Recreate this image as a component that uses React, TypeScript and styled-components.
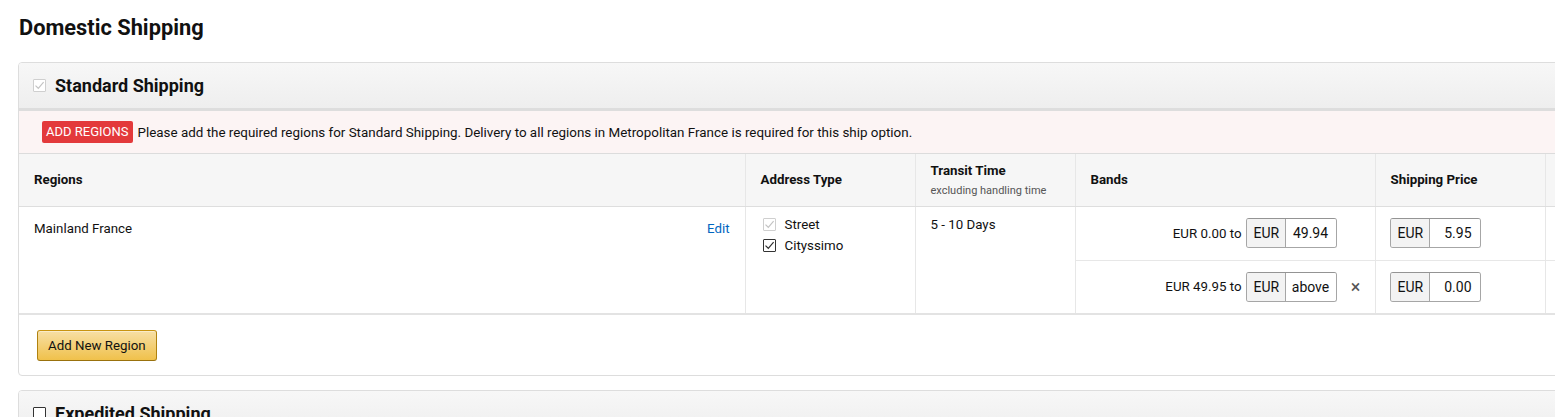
import React from "react";
import styled, { createGlobalStyle } from "styled-components";

const Global = createGlobalStyle`
  html, body { margin: 0; padding: 0; background: #fff; overflow: hidden; }
  body { font-family: Roboto, "Noto Sans", Arial, sans-serif; color: #111; font-size: 13px; }
`;

const Page = styled.div`
  padding: 15px 0 0 18px;
  width: 1620px;
`;

const Title = styled.h1`
  margin: 0 0 21px 1px;
  font-size: 21.8px;
  font-weight: 700;
  line-height: 26px;
  color: #111;
`;

const Panel = styled.section`
  border: 1px solid #ddd;
  border-radius: 4px;
  background: #fff;
  margin-bottom: 14px;
  overflow: hidden;
`;

const PanelHeader = styled.div`
  display: flex;
  align-items: center;
  gap: 9px;
  height: 45px;
  padding: 0 14px;
  background: linear-gradient(#f7f7f7, #eeeeee);
  border-bottom: 3px solid #dddddd;
`;

const HeaderTitle = styled.span`
  font-size: 18px;
  font-weight: 700;
  color: #111;
`;

const Box = styled.span<{ $state: "disabled" | "checked" | "empty" }>`
  display: inline-flex;
  align-items: center;
  justify-content: center;
  width: 13px;
  height: 13px;
  box-sizing: border-box;
  flex: none;
  border: 1px solid ${(p) => (p.$state === "disabled" ? "#cfcfcf" : "#333")};
  border-radius: 1px;
  background: #fff;
  svg { display: block; }
`;

const Check = ({ state }: { state: "disabled" | "checked" | "empty" }) => (
  <Box $state={state}>
    {state !== "empty" && (
      <svg width="11" height="11" viewBox="0 0 11 11">
        <path
          d="M1.5 5.6 L4.3 8.3 L9.6 2.2"
          fill="none"
          stroke={state === "disabled" ? "#c4c4c4" : "#333"}
          strokeWidth="1.2"
        />
      </svg>
    )}
  </Box>
);

const Alert = styled.div`
  display: flex;
  align-items: center;
  gap: 5px;
  height: 42px;
  padding: 0 23px;
  background: #fcf4f4;
  border-bottom: 1px solid #dcdcdc;
  font-size: 13.4px;
  color: #111;
`;

const Badge = styled.span`
  background: #e3393b;
  color: #fff;
  border-radius: 2px;
  height: 22px;
  line-height: 22px;
  padding: 0 4px;
  font-size: 13px;
`;

const Table = styled.table`
  border-collapse: collapse;
  width: 100%;
  table-layout: fixed;
  border-bottom: 2px solid #e3e3e3;
`;

const Th = styled.th<{ $w?: number }>`
  width: ${(p) => (p.$w ? `${p.$w}px` : "auto")};
  background: #f6f6f6;
  height: 52px;
  padding: 0 15px;
  text-align: left;
  font-size: 13.3px;
  font-weight: 700;
  color: #111;
  border-left: 1px solid #e7e7e7;
  border-bottom: 1px solid #dedede;
  box-sizing: border-box;
  vertical-align: middle;
  &:first-child { border-left: none; }
`;

const SubHead = styled.div`
  font-size: 11px;
  font-weight: 400;
  color: #555;
  margin-top: 6px;
`;

const Td = styled.td`
  border-left: 1px solid #e7e7e7;
  vertical-align: top;
  padding: 10px 15px;
  font-size: 13.3px;
  color: #111;
  &:first-child { border-left: none; }
`;

const RegionCell = styled.div`
  display: flex;
  justify-content: space-between;
  padding-top: 4px;
`;

const EditLink = styled.a`
  color: #0066c0;
  text-decoration: none;
  cursor: pointer;
`;

const OptionList = styled.div`
  display: flex;
  flex-direction: column;
  gap: 5px;
  padding-left: 2px;
`;

const Option = styled.label`
  display: flex;
  align-items: center;
  gap: 9px;
  line-height: 16px;
`;

const BandTd = styled.td<{ $last?: boolean; $pad?: boolean }>`
  border-left: 1px solid #e7e7e7;
  border-bottom: ${(p) => (p.$last ? "none" : "1px solid #e7e7e7")};
  height: 54px;
  padding: 0 ${(p) => (p.$pad ? "14px" : "0")} 0 14px;
  vertical-align: middle;
  box-sizing: border-box;
  font-size: 13.3px;
`;

const BandRow = styled.div<{ $align: "right" | "left" }>`
  display: flex;
  align-items: center;
  justify-content: ${(p) => (p.$align === "right" ? "flex-end" : "flex-start")};
`;

const FromText = styled.span`
  margin-right: 4px;
`;

const RemoveSlot = styled.span`
  width: 38px;
  text-align: center;
  font-size: 18px;
  color: #555;
  line-height: 16px;
`;

const InputGroup = styled.div`
  display: inline-flex;
  height: 30px;
  border: 1px solid #a6a6a6;
  border-top-color: #949494;
  border-radius: 3px;
  overflow: hidden;
  box-sizing: border-box;
`;

const Addon = styled.span`
  display: flex;
  align-items: center;
  padding: 0 7px;
  background: #f3f3f3;
  border-right: 1px solid #a6a6a6;
  font-size: 14px;
  width: 39px;
  box-sizing: border-box;
`;

const Field = styled.span<{ $align: "left" | "right" }>`
  display: flex;
  align-items: center;
  justify-content: ${(p) => (p.$align === "right" ? "flex-end" : "center")};
  width: 50px;
  padding: 0 8px;
  box-sizing: border-box;
  background: #fff;
  font-size: 14px;
`;

const Footer = styled.div`
  padding: 15px 18px 14px;
`;

const YellowButton = styled.button`
  font-family: inherit;
  font-size: 13.3px;
  color: #111;
  height: 31px;
  padding: 0 10px;
  border: 1px solid;
  border-color: #c89411 #b0820f #99710d;
  border-radius: 3px;
  background: linear-gradient(#f7dfa5, #f0c14b);
  box-shadow: inset 0 1px 0 rgba(255, 255, 255, 0.4);
  cursor: pointer;
`;

const bands = [
  { from: "EUR 0.00 to", to: "49.94", price: "5.95", removable: false },
  { from: "EUR 49.95 to", to: "above", price: "0.00", removable: true },
];

export default function App() {
  return (
    <>
      <Global />
      <Page>
        <Title>Domestic Shipping</Title>
        <Panel>
          <PanelHeader>
            <Check state="disabled" />
            <HeaderTitle>Standard Shipping</HeaderTitle>
          </PanelHeader>
          <Alert>
            <Badge>ADD REGIONS</Badge>
            <span>
              Please add the required regions for Standard Shipping. Delivery to all regions in
              Metropolitan France is required for this ship option.
            </span>
          </Alert>
          <Table>
            <thead>
              <tr>
                <Th $w={726}>Regions</Th>
                <Th $w={170}>Address Type</Th>
                <Th $w={160}>
                  Transit Time
                  <SubHead>excluding handling time</SubHead>
                </Th>
                <Th $w={300}>Bands</Th>
                <Th $w={170}>Shipping Price</Th>
                <Th></Th>
              </tr>
            </thead>
            <tbody>
              {bands.map((b, i) => (
                <tr key={i}>
                  {i === 0 && (
                    <>
                      <Td rowSpan={2}>
                        <RegionCell>
                          <span>Mainland France</span>
                          <EditLink>Edit</EditLink>
                        </RegionCell>
                      </Td>
                      <Td rowSpan={2}>
                        <OptionList>
                          <Option>
                            <Check state="disabled" />
                            Street
                          </Option>
                          <Option>
                            <Check state="checked" />
                            Cityssimo
                          </Option>
                        </OptionList>
                      </Td>
                      <Td rowSpan={2}>5 - 10 Days</Td>
                    </>
                  )}
                  <BandTd $last={i === bands.length - 1}>
                    <BandRow $align="right">
                      <FromText>{b.from}</FromText>
                      <InputGroup>
                        <Addon>EUR</Addon>
                        <Field $align="left">{b.to}</Field>
                      </InputGroup>
                      <RemoveSlot>{b.removable ? "×" : ""}</RemoveSlot>
                    </BandRow>
                  </BandTd>
                  <BandTd $last={i === bands.length - 1} $pad>
                    <BandRow $align="left">
                      <InputGroup>
                        <Addon>EUR</Addon>
                        <Field $align="right">{b.price}</Field>
                      </InputGroup>
                    </BandRow>
                  </BandTd>
                  <BandTd $last={i === bands.length - 1} $pad />
                </tr>
              ))}
            </tbody>
          </Table>
          <Footer>
            <YellowButton>Add New Region</YellowButton>
          </Footer>
        </Panel>
        <Panel>
          <PanelHeader>
            <Check state="empty" />
            <HeaderTitle>Expedited Shipping</HeaderTitle>
          </PanelHeader>
        </Panel>
      </Page>
    </>
  );
}
